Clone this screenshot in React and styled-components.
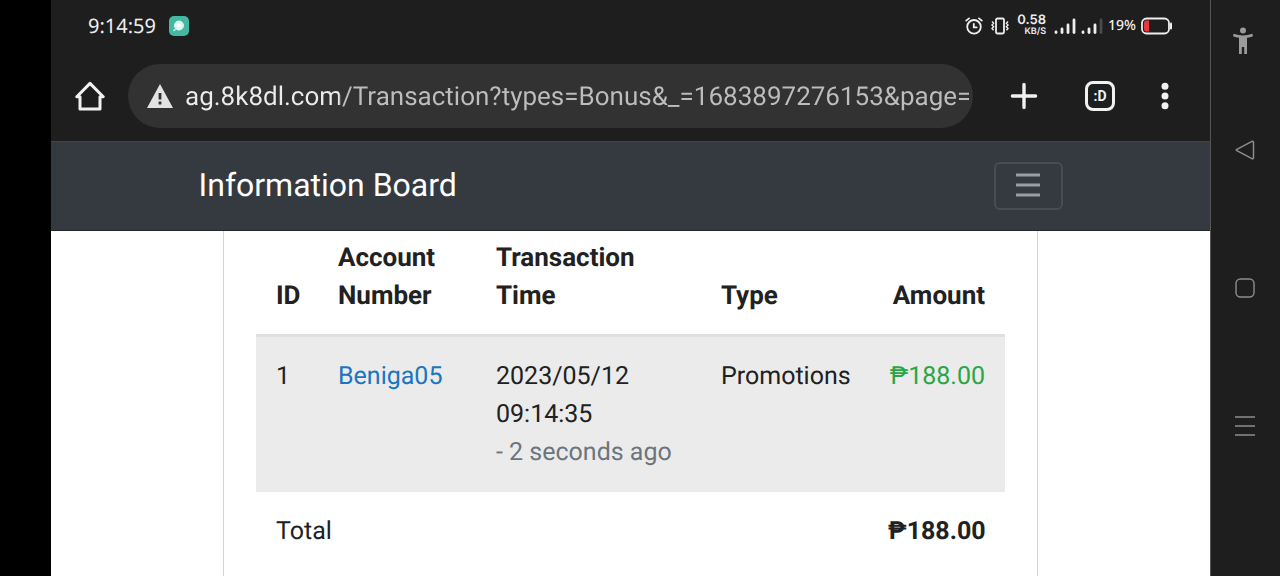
import React, {useState} from 'react'
import styled, { createGlobalStyle } from "styled-components";

const rows = [
    {id: 1, account: 'Beniga05', date: '2023/05/12', time: '09:14:35', ago: '- 2 seconds ago', type: 'Promotions', amount: '₱188.00'},
]

function StatusBar() {
    return (
        <Status>
            <Clock>9:14:59</Clock>
            <svg width="20" height="20" viewBox="0 0 20 20">
                <rect x="0" y="0" width="20" height="20" rx="5" fill="#45b8a4" />
                <circle cx="10" cy="9.5" r="4.4" fill="#d8f5ee" stroke="#fff" strokeWidth="1" />
                <circle cx="10" cy="9.5" r="2" fill="#fff" />
                <path d="M5 14.5l1-1" stroke="#d8f5ee" strokeWidth="1.6" strokeLinecap="round" />
            </svg>
            <StatusIcons>
                <Indicators>
                    <svg width="18" height="18" viewBox="0 0 18 18" fill="none" stroke="#eee" strokeWidth="1.8" strokeLinecap="round">
                        <circle cx="9" cy="9.8" r="6.8" />
                        <path d="M1.2 3.6L4 1.4M16.8 3.6L14 1.4M8.8 6.8V10.4H11.6" />
                    </svg>
                    <svg width="18" height="18" viewBox="0 0 18 18" fill="none" stroke="#eee" strokeWidth="1.8">
                        <rect x="5" y="1.5" width="8" height="15" rx="1.5" />
                        <path d="M1 4.5l1.6 1.8L1 8l1.6 1.8L1 11.5l1.6 1.8M17 4.5l-1.6 1.8L17 8l-1.6 1.8L17 11.5l-1.6 1.8" strokeWidth="1.4" />
                    </svg>
                    <Speed>
                        <b>0.58</b>
                        <small>KB/S</small>
                    </Speed>
                </Indicators>
                <Signal bars={4} />
                <Signal bars={3} />
                <Percent>19%</Percent>
                <svg width="32" height="18" viewBox="0 0 32 18">
                    <rect x="1" y="1.5" width="27" height="15" rx="4.5" fill="none" stroke="#eee" strokeWidth="1.8" />
                    <path d="M4.6 3.6H8V14.4H4.6Q3 13.6 3 12V6Q3 4.4 4.6 3.6Z" fill="#e8363d" />
                    <path d="M30 6.5v5" stroke="#eee" strokeWidth="2" strokeLinecap="round" />
                </svg>
            </StatusIcons>
        </Status>
    )
}

function Signal({bars}) {
    return (
        <svg width="22" height="18" viewBox="0 0 22 18" strokeWidth="2.8" strokeLinecap="round">
            {[15, 12, 8, 3].map((top, idx)=>(
                <path key={top} d={`M${2 + idx * 6} ${top}V15.6`} stroke={idx < bars ? '#eee' : '#4a4a4a'} />
            ))}
        </svg>
    )
}

function BrowserBar() {
    const [url, setUrl] = useState('ag.8k8dl.com/Transaction?types=Bonus&_=1683897276153&page=')
    return (
        <Toolbar>
            <IconButton aria-label="Home">
                <svg width="30" height="30" viewBox="0 0 30 30" fill="none" stroke="#f1f1f1" strokeWidth="3" strokeLinejoin="round">
                    <path d="M1.8 15.8L15 2.4L28.2 15.8H25V28H5V15.8Z" />
                </svg>
            </IconButton>
            <Omnibox>
                <svg width="26" height="24" viewBox="0 0 26 24">
                    <path d="M13 0L26 24H0Z" fill="#e3e3e3" />
                    <path d="M13 9v6.5M13 17.5v3" stroke="#323232" strokeWidth="2.8" />
                </svg>
                <Url aria-label="Address" value={url} onChange={(e)=> setUrl(e.target.value)} />
            </Omnibox>
            <Actions>
                <IconButton aria-label="New tab">
                    <svg width="30" height="30" viewBox="0 0 30 30" stroke="#f1f1f1" strokeWidth="3.4" strokeLinecap="round">
                        <path d="M3.4 15H26.6M15 3.4V26.6" />
                    </svg>
                </IconButton>
                <TabCount aria-label="Open tabs">:D</TabCount>
                <IconButton aria-label="More">
                    <svg width="8" height="28" viewBox="0 0 8 28" fill="#f1f1f1">
                        <circle cx="4" cy="4.2" r="3.5" />
                        <circle cx="4" cy="14" r="3.5" />
                        <circle cx="4" cy="23.8" r="3.5" />
                    </svg>
                </IconButton>
            </Actions>
        </Toolbar>
    )
}

function Transactions() {
    return (
        <Card>
            <Table>
                <colgroup>
                    <col width="62" />
                    <col width="158" />
                    <col width="225" />
                    <col width="167" />
                    <col />
                </colgroup>
                <thead>
                    <tr>
                        <Head>ID</Head>
                        <Head>Account Number</Head>
                        <Head>Transaction Time</Head>
                        <Head>Type</Head>
                        <Head $right>Amount</Head>
                    </tr>
                </thead>
                <tbody>
                    {rows.map((row)=>(
                        <Row key={row.id}>
                            <Cell>{row.id}</Cell>
                            <Cell><Account href="#">{row.account}</Account></Cell>
                            <Cell>
                                {row.date}<br />
                                {row.time}<br />
                                <Ago>{row.ago}</Ago>
                            </Cell>
                            <Cell>{row.type}</Cell>
                            <Cell $right $green>{row.amount}</Cell>
                        </Row>
                    ))}
                </tbody>
                <tfoot>
                    <tr>
                        <Cell colSpan="4">Total</Cell>
                        <Cell $right $bold>₱188.00</Cell>
                    </tr>
                </tfoot>
            </Table>
        </Card>
    )
}

function SystemNav() {
    return (
        <Rail>
            <IconButton aria-label="Accessibility">
                <svg width="26" height="28" viewBox="0 0 26 28" fill="#9b9b9b">
                    <circle cx="11" cy="3.6" r="3" />
                    <path d="M1.6 6.8Q11 10.2 20.4 6.8L21 9.2Q18 10.4 15 10.8V27H12.2V20H9.8V27H7V10.8Q4 10.4 1 9.2Z" />
                </svg>
            </IconButton>
            <IconButton aria-label="Back">
                <svg width="20" height="20" viewBox="0 0 20 20" fill="none" stroke="#8d8d8d" strokeWidth="1.5" strokeLinejoin="round">
                    <path d="M1.8 9.3L17 1.3Q18.5 1 18.5 2.4V17.6Q18.5 19 17 18.7L1.8 10.7Q.6 10 1.8 9.3Z" />
                </svg>
            </IconButton>
            <IconButton aria-label="Home screen">
                <svg width="20" height="20" viewBox="0 0 20 20" fill="none" stroke="#8d8d8d" strokeWidth="1.4">
                    <rect x="1" y="1" width="18" height="18" rx="4.5" />
                </svg>
            </IconButton>
            <IconButton aria-label="Recent apps">
                <svg width="20" height="20" viewBox="0 0 20 20" stroke="#8d8d8d" strokeWidth="1.4">
                    <path d="M0 1H20M0 10H20M0 19H20" />
                </svg>
            </IconButton>
        </Rail>
    )
}

function App() {
    return (
        <>
            <GlobalStyle />
            <Phone>
                <Screen>
                    <StatusBar />
                    <BrowserBar />
                    <Navbar>
                        <NavInner>
                            <Brand>Information Board</Brand>
                            <Toggler aria-label="Toggle navigation">
                                <svg width="26" height="26" viewBox="0 0 26 26" stroke="#9a9da2" strokeWidth="2.8">
                                    <path d="M1 2H25M1 12H25M1 22H25" />
                                </svg>
                            </Toggler>
                        </NavInner>
                    </Navbar>
                    <Transactions />
                </Screen>
                <SystemNav />
            </Phone>
        </>
    )
}

export default App

const GlobalStyle = createGlobalStyle`
  * {
    box-sizing: border-box;
  }
  body {
    margin: 0;
    background: #000;
    color: #212121;
    font-family: Roboto, "Liberation Sans", sans-serif;
    text-rendering: geometricPrecision;
  }
  button {
    padding: 0;
    border: 0;
    background: none;
    font-family: inherit;
    cursor: pointer;
  }
  svg {
    display: block;
    flex: none;
  }
`;
const Phone = styled.div`
  display: flex;
  min-height: 100vh;
  padding-left: 51px;
`;
const Screen = styled.main`
  display: flex;
  flex: 1;
  flex-direction: column;
  min-width: 0;
  background: #fff;
`;
const Status = styled.header`
  display: flex;
  align-items: center;
  gap: 13px;
  height: 51px;
  padding: 0 37px;
  background: #1e1e1e;
  color: #eee;
  font-family: "Noto Sans", sans-serif;
`;
const Clock = styled.time`
  font-size: 20px;
  line-height: 24px;
`;
const StatusIcons = styled.div`
  display: flex;
  align-items: center;
  gap: 5px;
  margin-left: auto;
`;
const Indicators = styled.div`
  display: flex;
  align-items: center;
  gap: 8px;
  margin-right: 3px;
`;
const Speed = styled.div`
  display: flex;
  flex-direction: column;
  align-items: flex-end;
  font-family: Inter, sans-serif;
  b {
    font-size: 13px;
    font-weight: 600;
    line-height: 12px;
  }
  small {
    font-size: 9px;
    font-weight: 600;
    line-height: 11px;
  }
`;
const Percent = styled.span`
  font-size: 14px;
  font-weight: 500;
  line-height: 24px;
`;
const Toolbar = styled.div`
  display: flex;
  align-items: center;
  height: 91px;
  padding: 0 41px 0 24px;
  border-bottom: 1px solid #454545;
  background: #1e1e1e;
`;
const IconButton = styled.button`
  display: flex;
  align-items: center;
  justify-content: center;
`;
const Omnibox = styled.div`
  display: flex;
  flex: 1;
  align-items: center;
  gap: 12px;
  height: 64px;
  min-width: 0;
  margin: 0 36px 0 23px;
  padding: 0 4px 0 19px;
  border-radius: 32px;
  background: #323232;
`;
const Url = styled.input`
  flex: 1;
  min-width: 0;
  height: 40px;
  padding: 2px 0 0;
  border: 0;
  outline: 0;
  /* host is brighter than the path */
  background: linear-gradient(90deg, #ececec 154px, #bdbdbd 154px);
  background-clip: text;
  color: transparent;
  caret-color: #ececec;
  font-family: inherit;
  font-size: 26px;
  text-rendering: inherit;
`;
const Actions = styled.div`
  display: flex;
  align-items: center;
  gap: 46px;
`;
const TabCount = styled(IconButton)`
  && {
    width: 30px;
    height: 30px;
    border: 3px solid #f1f1f1;
    border-radius: 8px;
  }
  color: #f1f1f1;
  font-size: 14px;
  font-weight: 700;
  line-height: 16px;
`;
const Navbar = styled.nav`
  height: 89px;
  border-bottom: 1px solid #23272b;
  background: #343a40;
`;
const NavInner = styled.div`
  display: flex;
  align-items: center;
  justify-content: space-between;
  height: 100%;
  max-width: 864px;
  margin: 0 auto;
`;
const Brand = styled.span`
  padding-bottom: 2px;
  color: #fff;
  font-size: 32px;
  line-height: 38px;
`;
const Toggler = styled(IconButton)`
  && {
    width: 69px;
    height: 48px;
    border: 2px solid #484d53;
    border-radius: 6px;
  }
`;
const Card = styled.section`
  flex: 1;
  width: 100%;
  max-width: 815px;
  margin: 0 auto;
  padding: 0 32px;
  border: solid #d5d5d5;
  border-width: 0 1px;
`;
const Table = styled.table`
  width: 100%;
  border-spacing: 0;
  table-layout: fixed;
  font-size: 25px;
  line-height: 38px;
`;
const Head = styled.th`
  padding: 8px 20px 19px;
  border-bottom: 3px solid #dee0e2;
  font-size: 26px;
  font-weight: 700;
  text-align: ${(props)=> props.$right ? 'right' : 'left'};
  vertical-align: bottom;
`;
const Row = styled.tr`
  background: #ebebeb;
`;
const Cell = styled.td`
  padding: 21px 20px 20px;
  color: ${(props)=> props.$green ? '#28a745' : 'inherit'};
  font-weight: ${(props)=> props.$bold ? 700 : 400};
  text-align: ${(props)=> props.$right ? 'right' : 'left'};
  vertical-align: top;
  white-space: nowrap;
`;
const Account = styled.a`
  color: #1976c0;
  text-decoration: none;
`;
const Ago = styled.span`
  color: #6c757d;
`;
const Rail = styled.aside`
  display: grid;
  grid-template-rows: 81px repeat(3, 1fr) 81px;
  width: 70px;
  padding-right: 2px;
  border-left: 1px solid #555;
  background: #1e1e1e;
`;
